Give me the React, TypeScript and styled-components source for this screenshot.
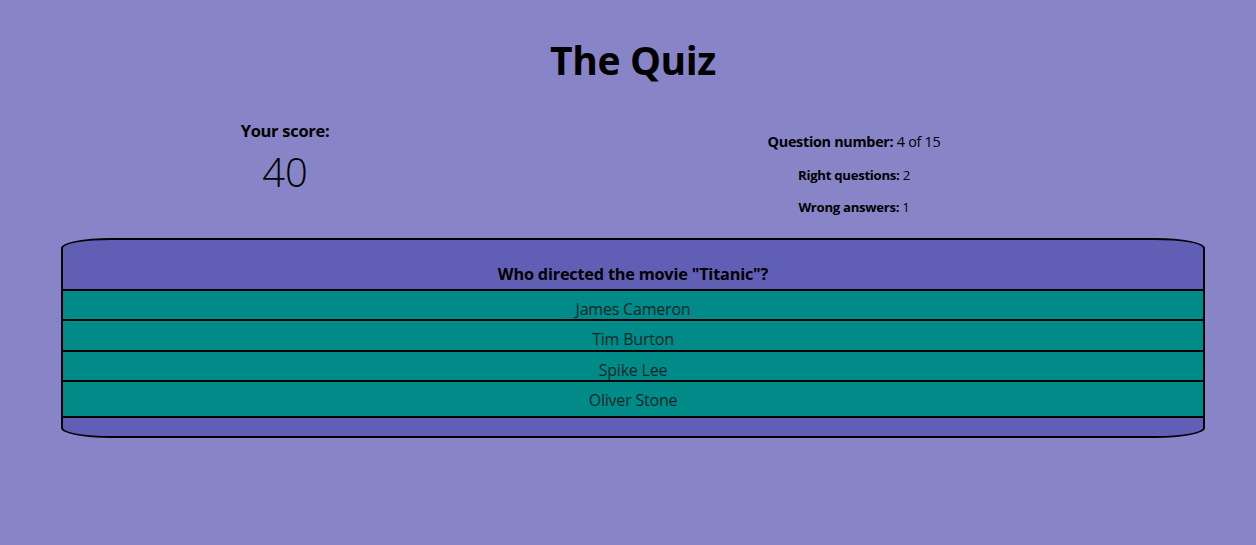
import React from "react";
import styled, { createGlobalStyle } from "styled-components";

const Global = createGlobalStyle`
  html, body {
    margin: 0;
    padding: 0;
    background: #8785c7;
    font-family: "Open Sans", "Noto Sans", sans-serif;
    color: #000;
  }
`;

const Page = styled.main`
  box-sizing: border-box;
  width: 1256px;
  min-height: 545px;
  padding: 0 0 0 10px;
  display: flex;
  flex-direction: column;
`;

const Title = styled.h1`
  margin: 34px 0 0;
  text-align: center;
  font-size: 39px;
  line-height: 52px;
  font-weight: 700;
  letter-spacing: -0.4px;
`;

const Stats = styled.section`
  display: grid;
  grid-template-columns: 550px 588px;
  margin-top: 32px;
  height: 120px;
`;

const ScoreBox = styled.div`
  display: flex;
  flex-direction: column;
  align-items: center;
  padding-top: 2px;
`;

const ScoreLabel = styled.div`
  font-size: 16.5px;
  font-weight: 700;
  line-height: 22px;
  letter-spacing: -0.3px;
`;

const ScoreValue = styled.div`
  margin-top: 8px;
  font-size: 40px;
  font-weight: 300;
  line-height: 44px;
`;

const InfoBox = styled.div`
  display: flex;
  flex-direction: column;
  align-items: center;
  padding-top: 14px;
  gap: 12.5px;
`;

const InfoLine = styled.div<{ $big?: boolean }>`
  font-size: ${(p) => (p.$big ? "14.4px" : "13.2px")};
  line-height: 20px;
  letter-spacing: -0.3px;
  & b {
    font-weight: 700;
  }
`;

const Card = styled.section`
  box-sizing: border-box;
  width: 1144px;
  margin: 0 auto;
  border: 2px solid #000;
  border-radius: 50px / 10px;
  background: #615eb6;
  overflow: hidden;
  display: flex;
  flex-direction: column;
`;

const Question = styled.h3`
  margin: 0;
  padding: 22px 0 3px;
  text-align: center;
  font-size: 16.3px;
  line-height: 24px;
  font-weight: 700;
  letter-spacing: -0.2px;
`;

const Answer = styled.div<{ $h: number }>`
  box-sizing: border-box;
  height: ${(p) => p.$h}px;
  overflow: hidden;
  border-top: 2px solid #000;
  background: #008b88;
  color: #0b2727;
  text-align: center;
  font-size: 16px;
  padding-top: 7px;
  line-height: 22px;
  letter-spacing: -0.2px;
`;

const Footer = styled.div`
  height: 18px;
  border-top: 2px solid #000;
`;

const answers = [
  { text: "James Cameron", h: 30 },
  { text: "Tim Burton", h: 31 },
  { text: "Spike Lee", h: 30 },
  { text: "Oliver Stone", h: 36 },
];

export default function App() {
  return (
    <Page>
      <Global />
      <Title>The Quiz</Title>
      <Stats>
        <ScoreBox>
          <ScoreLabel>Your score:</ScoreLabel>
          <ScoreValue>40</ScoreValue>
        </ScoreBox>
        <InfoBox>
          <InfoLine $big>
            <b>Question number:</b> 4 of 15
          </InfoLine>
          <InfoLine>
            <b>Right questions:</b> 2
          </InfoLine>
          <InfoLine>
            <b>Wrong answers:</b> 1
          </InfoLine>
        </InfoBox>
      </Stats>
      <Card>
        <Question>Who directed the movie "Titanic"?</Question>
        {answers.map((a) => (
          <Answer key={a.text} $h={a.h}>
            {a.text}
          </Answer>
        ))}
        <Footer />
      </Card>
    </Page>
  );
}
